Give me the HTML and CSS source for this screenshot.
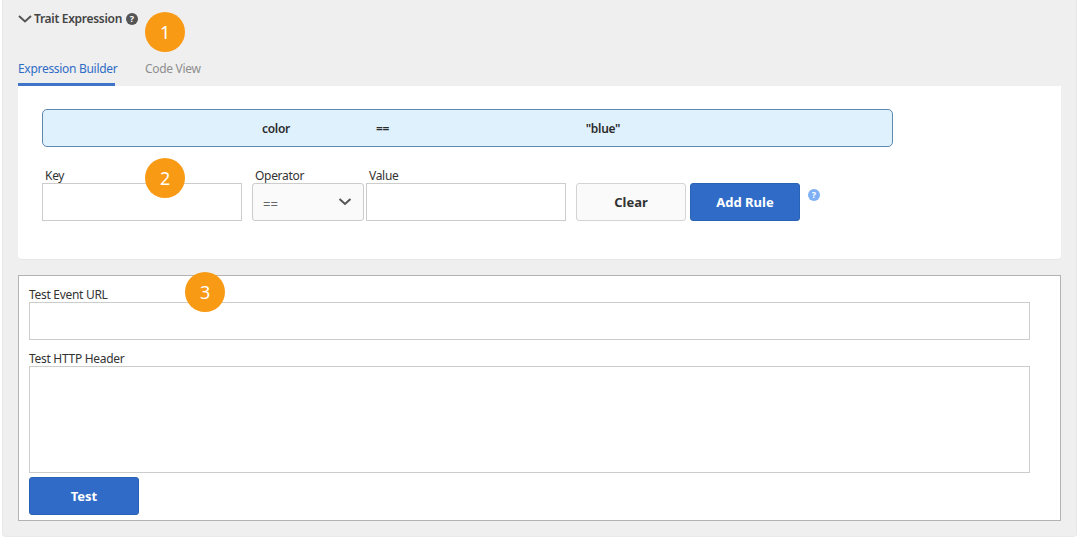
FILE: index.html
```html
<!DOCTYPE html>
<html>
<head>
  <title>Trait Expression</title>
  <link rel="stylesheet" href="styles.css">
</head>
<body>

  <div class="panel">
    <div class="panel-head">
      <svg class="caret" width="14" height="8" viewBox="0 0 14 8"><path d="M1 1l6 5.500 6-5.500" fill="none" stroke="#555" stroke-width="2"/></svg>
      <span class="panel-title">Trait Expression</span>
      <span class="help help-dark">?</span>
    </div>

    <div class="tabs">
      <span class="tab tab-active">Expression Builder</span>
      <span class="tab">Code View</span>
    </div>

    <div class="card">
      <div class="rule">
        <span class="rule-key">color</span>
        <span class="rule-op">==</span>
        <span class="rule-value">"blue"</span>
      </div>

      <div class="rule-form">
        <div class="field field-key">
          <label>Key</label>
          <input type="text">
        </div>
        <div class="field field-op">
          <label>Operator</label>
          <div class="select">
            <span class="select-value">==</span>
            <svg width="14" height="8" viewBox="0 0 14 8"><path d="M1.500 1l5.500 5 5.500-5" fill="none" stroke="#555" stroke-width="2"/></svg>
          </div>
        </div>
        <div class="field field-value">
          <label>Value</label>
          <input type="text">
        </div>
        <button class="btn btn-clear">Clear</button>
        <button class="btn btn-blue">Add Rule</button>
        <span class="help help-blue">?</span>
      </div>
    </div>

    <div class="test-box">
      <label>Test Event URL</label>
      <input type="text">
      <label class="label-header">Test HTTP Header</label>
      <textarea></textarea>
      <button class="btn btn-blue btn-test">Test</button>
    </div>

    <span class="badge badge-1">1</span>
    <span class="badge badge-2">2</span>
    <span class="badge badge-3">3</span>
  </div>

</body>
</html>
```

FILE: styles.css
```css
html, body {
  height: 100%;
}
body {
  margin: 0;
  background: #fff;
  font-family: "Noto Sans", "Open Sans", sans-serif;
  font-size: 12px;
  letter-spacing: -0.3px;
  color: #333;
  overflow: hidden;
}
.panel {
  position: relative;
  box-sizing: border-box;
  width: 1075px;
  height: 537px;
  margin-left: 2px;
  padding: 0 16px 0 15px;
  background: #efefef;
  border: 1px solid #e9e9e9;
  border-top: 0;
  border-radius: 0 0 4px 4px;
}
.panel-head {
  display: flex;
  align-items: center;
  height: 37px;
}
.caret {
  margin-right: 2px;
}
.panel-title {
  font-weight: 600;
  color: #444;
}
.help {
  display: inline-block;
  width: 12px;
  height: 12px;
  border-radius: 50%;
  color: #fff;
  font-size: 9px;
  font-weight: 700;
  line-height: 12px;
  text-align: center;
  letter-spacing: 0;
}
.help-dark {
  margin-left: 4px;
  background: #555;
}
.help-blue {
  align-self: flex-start;
  margin: 24px 0 0 8px;
  background: #7fb0f5;
}
.tabs {
  display: flex;
  height: 49px;
  box-sizing: border-box;
  padding-top: 23px;
}
.tab {
  color: #8e8e8e;
  margin-right: 30px;
}
.tab-active {
  width: 97px;
  height: 26px;
  box-sizing: border-box;
  color: #2f6cc6;
  border-bottom: 3px solid #3f74c8;
  white-space: nowrap;
}
.card {
  box-sizing: border-box;
  width: 1043px;
  height: 174px;
  padding: 23px 24px 0;
  background: #fff;
  border-bottom: 1px solid #e6e6e6;
  border-radius: 0 0 4px 4px;
}
.rule {
  box-sizing: border-box;
  display: grid;
  grid-template-columns: 200px 127px 200px;
  align-items: center;
  width: 851px;
  height: 38px;
  padding-left: 133px;
  background: #e0f1fe;
  border: 1px solid #5f88ae;
  border-radius: 5px;
  font-weight: 600;
  color: #2c2c2c;
}
.rule-key, .rule-value {
  text-align: center;
}
.rule-form {
  display: flex;
  align-items: flex-end;
  margin-top: 18px;
  height: 56px;
}
.field label {
  display: block;
  height: 18px;
  line-height: 22px;
  padding-left: 3px;
}
input, textarea {
  display: block;
  box-sizing: border-box;
  background: #fff;
  border: 1px solid #ccc;
  outline: 0;
  margin: 0;
}
.field input {
  height: 38px;
  width: 200px;
}
.field-op {
  margin-left: 10px;
  margin-right: 2px;
}
.select {
  box-sizing: border-box;
  display: flex;
  align-items: center;
  justify-content: space-between;
  width: 112px;
  height: 38px;
  padding: 0 11px 0 10px;
  background: #fafafa;
  border: 1px solid #ccc;
  border-radius: 3px;
}
.select-value {
  padding-top: 4px;
  font-size: 13px;
  letter-spacing: 0;
  color: #666;
}
.btn {
  box-sizing: border-box;
  width: 110px;
  height: 38px;
  border-radius: 3px;
  font-family: inherit;
  font-size: 13px;
  font-weight: 700;
}
.btn-clear {
  margin-left: 10px;
  margin-right: 4px;
  background: #fafafa;
  border: 1px solid #d4d4d4;
  color: #333;
}
.btn-blue {
  background: #306cc7;
  border: 1px solid #2a62b6;
  color: #fff;
}
.test-box {
  box-sizing: border-box;
  width: 1043px;
  height: 246px;
  margin-top: 15px;
  padding: 11px 10px 0;
  background: #fff;
  border: 1px solid #b3b3b3;
}
.test-box label {
  display: block;
  height: 15px;
  line-height: 15px;
}
.test-box input {
  width: 1001px;
  height: 38px;
}
.label-header {
  margin-top: 11px;
}
.test-box textarea {
  width: 1001px;
  height: 107px;
  resize: none;
}
.btn-test {
  display: block;
  margin-top: 4px;
}
.badge {
  position: absolute;
  width: 40px;
  height: 40px;
  border-radius: 50%;
  background: #f99a14;
  color: #fff;
  font-size: 18px;
  line-height: 40px;
  text-align: center;
}
.badge-1 {
  left: 142px;
  top: 12px;
}
.badge-2 {
  left: 142px;
  top: 158px;
}
.badge-3 {
  left: 182px;
  top: 272px;
}
```
